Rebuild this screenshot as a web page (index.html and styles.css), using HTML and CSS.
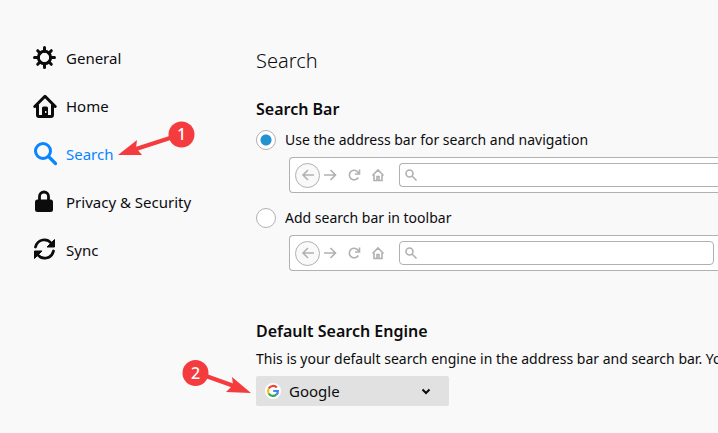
FILE: index.html
```html
<!DOCTYPE html>
<html lang="en">
<head>
<meta charset="utf-8">
<title>Search preferences</title>
<link rel="stylesheet" href="styles.css">
</head>
<body>
<svg class="symbols" aria-hidden="true">
  <symbol id="back" viewBox="0 0 14 14"><path d="M13 7H2M7 2 2 7l5 5"/></symbol>
  <symbol id="forward" viewBox="0 0 14 14"><path d="M1 7h11M7.500 2l5 5-5 5"/></symbol>
  <symbol id="reload" viewBox="0 0 14 14"><path d="M11.500 5A4.800 4.800 0 1 0 11.300 9.500M12.500 1.500v4.500H8"/></symbol>
  <symbol id="house" viewBox="0 0 14 14"><path d="M1.500 7.500 7 2l5.500 5.500M3 7v5.500h8V7M6 12V8.500h2V12"/></symbol>
  <symbol id="lens" viewBox="0 0 14 14"><circle cx="5.500" cy="5.500" r="3.500"/><path d="m8 8 4.500 4.500"/></symbol>
</svg>
<div class="page">
  <nav class="sidebar" aria-label="Categories">
    <a class="item" href="#general">
      <svg class="icon" viewBox="0 0 24 24"><circle cx="11.500" cy="11.500" r="6.200" fill="none" stroke="currentColor" stroke-width="3"/><path d="M11.500 1.500v4M11.500 17.500v4M1.500 11.500h4M17.500 11.500h4M4.700 4.700l2.400 2.400M15.900 15.900l2.400 2.400M4.700 18.300l2.400-2.400M15.900 7.100l2.400-2.400" stroke="currentColor" stroke-width="3" stroke-linecap="round"/></svg>
      <span>General</span></a>
    <a class="item" href="#home">
      <svg class="icon" viewBox="0 0 24 24"><path d="M1.800 12.500 12 2.300 22.200 12.500M4.500 11v10q0 1.500 1.500 1.500h12q1.500 0 1.500-1.500V11" fill="none" stroke="currentColor" stroke-width="3" stroke-linecap="round" stroke-linejoin="round"/><path d="M9 23v-9q0-1.500 1.500-1.500h3q1.500 0 1.500 1.500v9z" fill="currentColor"/><path d="M12.700 17v2" stroke="#f9f9fa" stroke-width="1.300"/></svg>
      <span>Home</span></a>
    <a class="item current" href="#search" aria-current="page">
      <svg class="icon" viewBox="0 0 24 24"><circle cx="10" cy="9" r="7.500" fill="none" stroke="currentColor" stroke-width="3"/><path d="m15.500 14.500 7 7" stroke="currentColor" stroke-width="3.200" stroke-linecap="round"/></svg>
      <span>Search</span></a>
    <a class="item" href="#privacy">
      <svg class="icon" viewBox="0 0 24 24"><path d="M6.500 11V6.500a4.500 4.500 0 0 1 9 0V11" fill="none" stroke="currentColor" stroke-width="2.800"/><rect x="2" y="9.500" width="18" height="12.500" rx="2.500" fill="currentColor"/></svg>
      <span>Privacy &amp; Security</span></a>
    <a class="item" href="#sync">
      <svg class="icon" viewBox="0 0 24 24"><path d="M2.500 9C4.500 1 14 -.5 18.500 5.500M20.500 13C18.500 21 9 22.500 4.500 16.500" fill="none" stroke="currentColor" stroke-width="2.800" stroke-linecap="round"/><path d="M21.500 1.500v7.500H14zM1.500 20.500V13H9z" fill="currentColor" stroke="currentColor" stroke-linejoin="round"/></svg>
      <span>Sync</span></a>
  </nav>
  <main class="content">
    <h1 class="title">Search</h1>
    <section class="group">
      <h2 class="heading">Search Bar</h2>
      <label class="choice"><input class="radio" type="radio" name="bar" checked><span>Use the address bar for search and navigation</span></label>
      <div class="toolbar joined" aria-hidden="true">
        <span class="round"><svg class="glyph"><use href="#back"/></svg></span>
        <svg class="glyph"><use href="#forward"/></svg>
        <svg class="glyph"><use href="#reload"/></svg>
        <svg class="glyph"><use href="#house"/></svg>
        <span class="field"><svg class="glyph"><use href="#lens"/></svg></span>
      </div>
      <label class="choice"><input class="radio" type="radio" name="bar"><span>Add search bar in toolbar</span></label>
      <div class="toolbar" aria-hidden="true">
        <span class="round"><svg class="glyph"><use href="#back"/></svg></span>
        <svg class="glyph"><use href="#forward"/></svg>
        <svg class="glyph"><use href="#reload"/></svg>
        <svg class="glyph"><use href="#house"/></svg>
        <span class="field"><svg class="glyph"><use href="#lens"/></svg></span>
      </div>
    </section>
    <section class="group">
      <h2 class="heading">Default Search Engine</h2>
      <label class="note" for="engine">This is your default search engine in the address bar and search bar. Yo</label>
      <div class="picker">
        <select class="select" id="engine"><option>Google</option></select>
        <svg class="logo" viewBox="0 0 16 16"><circle cx="8" cy="8" r="8" fill="#fff"/><g fill="none" stroke-width="2.200"><path d="M11.800 4.600A5 5 0 0 0 3.700 5.600" stroke="#ea4335"/><path d="M3.700 5.600a5 5 0 0 0 0 4.900" stroke="#fbbc05"/><path d="M3.700 10.500a5 5 0 0 0 7.600 1.200" stroke="#34a853"/><path d="M11.300 11.700A4.600 4.600 0 0 0 12.900 8H8.200" stroke="#4285f4"/></g></svg>
        <svg class="chevron" viewBox="0 0 10 10"><path d="m1.500 3.500 3.500 3.500 3.500-3.500" fill="none" stroke="#0c0c0d" stroke-width="2"/></svg>
      </div>
    </section>
  </main>
  <svg class="callout first" viewBox="0 0 80 40"><path d="M54 18 20 29" stroke="#f43b3e" stroke-width="4"/><path d="M2 35 21 20l-1 8 6 7z" fill="#f43b3e"/><circle cx="65.500" cy="14.500" r="13" fill="#f43b3e"/><text x="65.500" y="20">1</text></svg>
  <svg class="callout second" viewBox="0 0 80 40"><path d="m25 18 28 10" stroke="#f43b3e" stroke-width="4"/><path d="M70 35 51 19l1 8-7 7z" fill="#f43b3e"/><circle cx="14.500" cy="15" r="13" fill="#f43b3e"/><text x="14.500" y="21">2</text></svg>
</div>
</body>
</html>
```
FILE: styles.css
```css
* { box-sizing: border-box; }
body {
  margin: 0;
  background: #f9f9fa;
  color: #0c0c0d;
  font: 15px/20px "Noto Sans", "Open Sans", sans-serif;
}
.symbols { position: absolute; width: 0; height: 0; }
.page {
  position: relative;
  display: flex;
  min-height: 100vh;
  overflow: hidden;
}
.sidebar { flex: 0 0 256px; padding: 34px 0 0 33px; }
.item {
  display: flex;
  align-items: center;
  gap: 9px;
  height: 48px;
  color: inherit;
  text-decoration: none;
}
.current { color: #0a84ff; }
.icon { width: 24px; height: 24px; }
.content { flex: 1; min-width: 0; padding-top: 46px; }
.title { margin: 0 0 20px; font-size: 20px; font-weight: 300; line-height: 30px; }
.heading { margin: 0; font-size: 16px; font-weight: 600; line-height: 26px; }
.group { margin-bottom: 47px; }
.choice {
  display: flex;
  align-items: center;
  gap: 9px;
  height: 35px;
  font-size: 14px;
}
.radio {
  appearance: none;
  width: 20px;
  height: 20px;
  margin: 0;
  border: 1px solid #b1b1b3;
  border-radius: 50%;
  background: #fff;
}
.radio:checked { background: radial-gradient(circle, #2292d0 5px, #fff 6px); }
.toolbar {
  display: flex;
  align-items: center;
  height: 36px;
  margin: 0 0 7px 33px;
  padding: 0 4px 0 5px;
  border: 1px solid #b1b1b3;
  border-right: 0;
  border-radius: 4px 0 0 4px;
  background: #fff;
}
.toolbar > .glyph { margin-right: 10px; }
.glyph { width: 14px; height: 14px; fill: none; stroke: #b1b1b3; stroke-width: 1.6; }
.round {
  display: grid;
  place-items: center;
  width: 25px;
  height: 25px;
  margin-right: 3px;
  border: 1px solid #b1b1b3;
  border-radius: 50%;
  background: #f9f9fa;
}
.field {
  display: flex;
  flex: 1;
  align-items: center;
  height: 24px;
  margin-left: 4px;
  padding-left: 4px;
  border: 1px solid #b1b1b3;
  border-radius: 4px;
}
.joined { padding-right: 0; }
.joined .field { border-right: 0; border-radius: 4px 0 0 4px; }
.note { display: block; padding: 5px 0 7px; font-size: 14px; white-space: nowrap; }
.picker { position: relative; width: 193px; }
.select {
  appearance: none;
  display: block;
  width: 100%;
  height: 30px;
  padding: 0 33px;
  border: 0;
  border-radius: 2px;
  background: #e1e1e2;
  color: inherit;
  font: inherit;
}
.logo { position: absolute; left: 9px; top: 7px; width: 16px; height: 16px; }
.chevron { position: absolute; right: 18px; top: 10px; width: 10px; height: 10px; }
.callout {
  position: absolute;
  width: 80px;
  height: 40px;
  fill: #fff;
  font: 500 16px "Noto Sans", sans-serif;
  text-anchor: middle;
  pointer-events: none;
}
.first { left: 116px; top: 120px; }
.second { left: 181px; top: 358px; }
```
